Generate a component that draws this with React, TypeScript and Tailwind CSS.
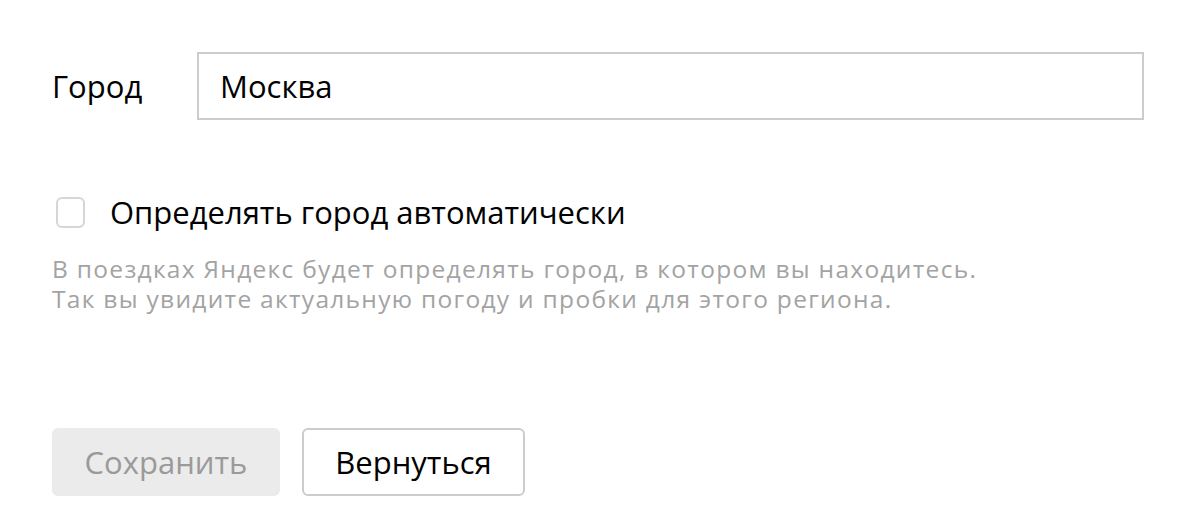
export default function App() {
  return (
    <div className="w-[1200px] h-[526px] bg-white pl-[52px] pr-[56px] pt-[52px] text-black" style={{ fontFamily: '"Open Sans", "Noto Sans", sans-serif' }}>
      <div className="flex items-center">
        <div className="w-[145px] text-[31px] leading-none">Город</div>
        <div className="flex-1 h-[68px] border-2 border-[#cccccc] flex items-center pl-[21px] text-[31px]">Москва</div>
      </div>
      <div className="mt-[77px] flex items-center">
        <div className="w-[29px] h-[31px] ml-[4px] rounded-[6px] border-2 border-[#d6d6d6]"></div>
        <div className="ml-[25px] text-[31px] leading-none">Определять город автоматически</div>
      </div>
      <div className="mt-[26px] text-[24.5px] leading-[30px] tracking-[1.3px] text-[#a3a3a3]">
        <div>В поездках Яндекс будет определять город, в котором вы находитесь.</div>
        <div>Так вы увидите актуальную погоду и пробки для этого региона.</div>
      </div>
      <div className="mt-[114px] flex gap-[22px]">
        <div className="w-[228px] h-[68px] rounded-[6px] bg-[#ebebeb] text-[#9a9a9a] text-[31px] flex items-center justify-center">Сохранить</div>
        <div className="w-[223px] h-[68px] rounded-[6px] border-2 border-[#cccccc] text-[31px] flex items-center justify-center">Вернуться</div>
      </div>
    </div>
  );
}
